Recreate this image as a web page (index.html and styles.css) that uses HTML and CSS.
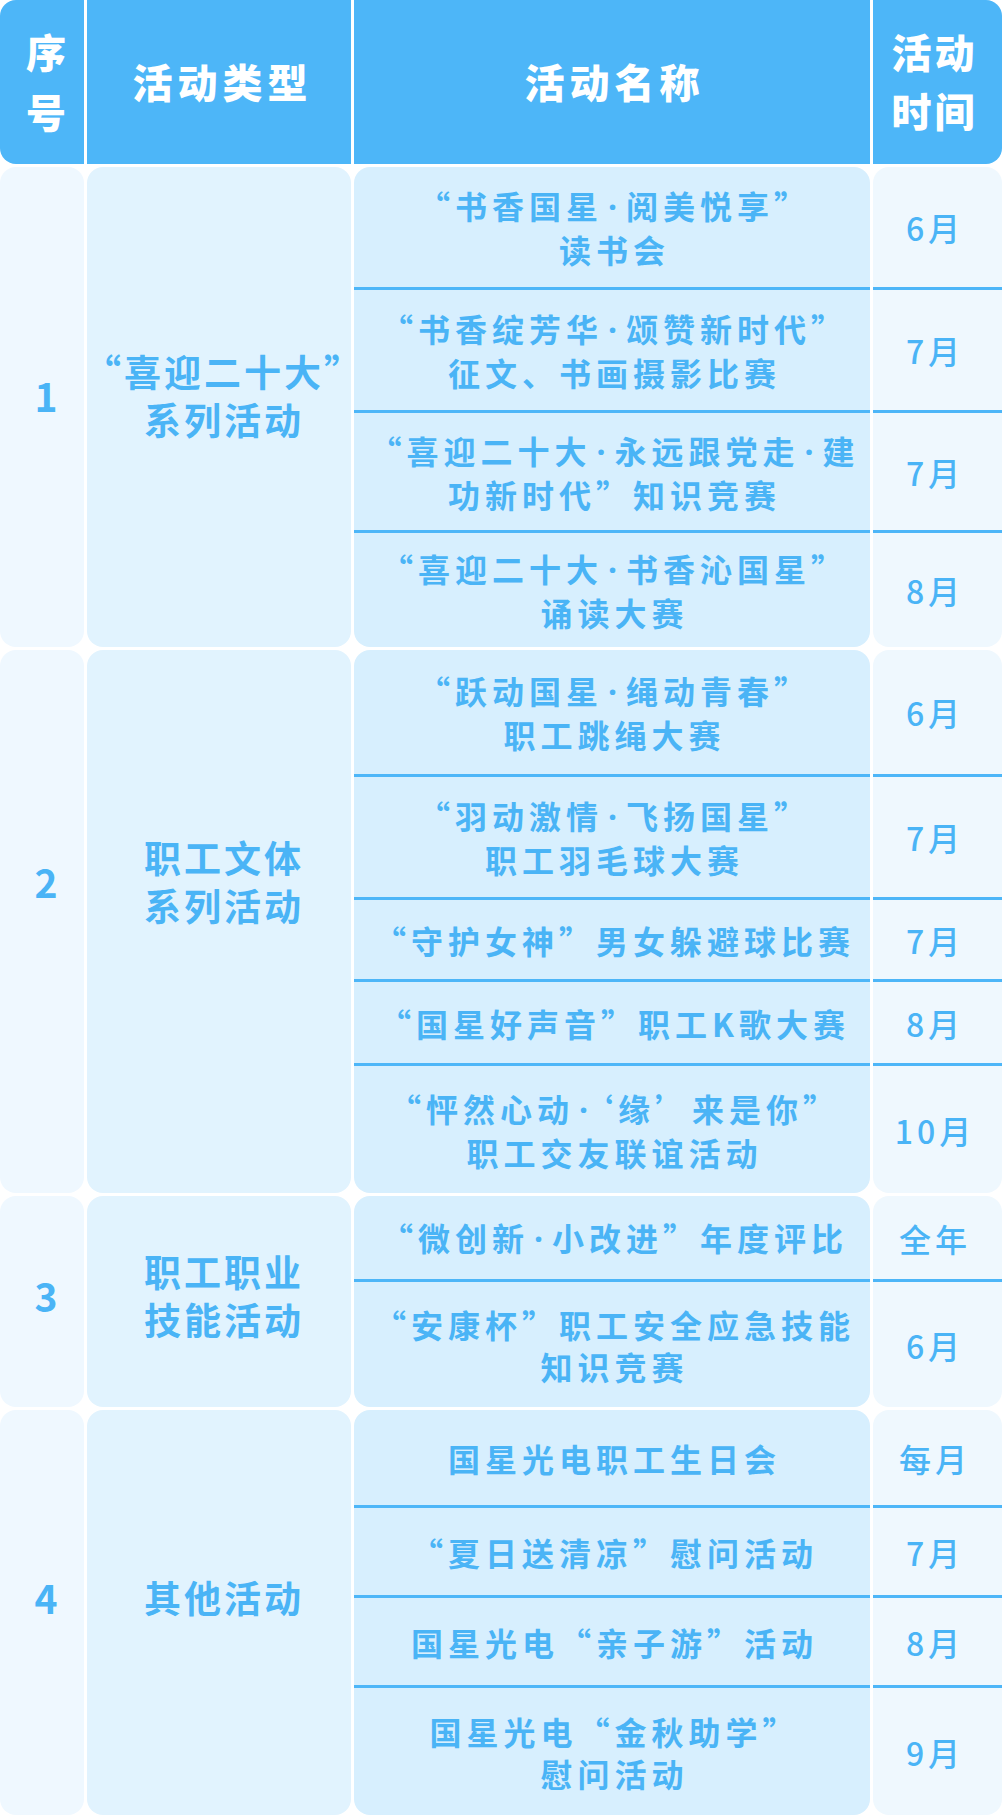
FILE: index.html
```html
<!DOCTYPE html>
<html lang="zh-CN">
<head>
<meta charset="utf-8">
<title>活动安排</title>
<link rel="stylesheet" href="styles.css">
</head>
<body>
<div class="table">
  <div class="head">
    <div class="hc hc1">序<br>号</div>
    <div class="hc hc2">活动类型</div>
    <div class="hc hc3">活动名称</div>
    <div class="hc hc4">活动<br>时间</div>
  </div>

  <div class="group g1">
    <div class="no">1</div>
    <div class="type">“喜迎二十大”<br>系列活动</div>
    <div class="name"><span class="txt">“书香国星<span class="dot">·</span>阅美悦享”<br>读书会</span></div>
    <div class="time">6月</div>
    <div class="name"><span class="txt">“书香绽芳华<span class="dot">·</span>颂赞新时代”<br>征文、书画摄影比赛</span></div>
    <div class="time">7月</div>
    <div class="name"><span class="txt">“喜迎二十大<span class="dot">·</span>永远跟党走<span class="dot">·</span>建<br>功新时代”知识竞赛</span></div>
    <div class="time">7月</div>
    <div class="name"><span class="txt">“喜迎二十大<span class="dot">·</span>书香沁国星”<br>诵读大赛</span></div>
    <div class="time">8月</div>
  </div>

  <div class="group g2">
    <div class="no">2</div>
    <div class="type">职工文体<br>系列活动</div>
    <div class="name"><span class="txt">“跃动国星<span class="dot">·</span>绳动青春”<br>职工跳绳大赛</span></div>
    <div class="time">6月</div>
    <div class="name"><span class="txt">“羽动激情<span class="dot">·</span>飞扬国星”<br>职工羽毛球大赛</span></div>
    <div class="time">7月</div>
    <div class="name"><span class="txt">“守护女神”男女躲避球比赛</span></div>
    <div class="time">7月</div>
    <div class="name"><span class="txt">“国星好声音”职工K歌大赛</span></div>
    <div class="time">8月</div>
    <div class="name"><span class="txt">“怦然心动<span class="dot">·</span>‘缘’来是你”<br>职工交友联谊活动</span></div>
    <div class="time">10月</div>
  </div>

  <div class="group g3">
    <div class="no">3</div>
    <div class="type">职工职业<br>技能活动</div>
    <div class="name"><span class="txt">“微创新<span class="dot">·</span>小改进”年度评比</span></div>
    <div class="time">全年</div>
    <div class="name"><span class="txt">“安康杯”职工安全应急技能<br>知识竞赛</span></div>
    <div class="time">6月</div>
  </div>

  <div class="group g4">
    <div class="no">4</div>
    <div class="type">其他活动</div>
    <div class="name"><span class="txt">国星光电职工生日会</span></div>
    <div class="time">每月</div>
    <div class="name"><span class="txt">“夏日送清凉”慰问活动</span></div>
    <div class="time">7月</div>
    <div class="name"><span class="txt">国星光电“亲子游”活动</span></div>
    <div class="time">8月</div>
    <div class="name"><span class="txt">国星光电“金秋助学”<br>慰问活动</span></div>
    <div class="time">9月</div>
  </div>
</div>
</body>
</html>
```

FILE: styles.css
```css
* {
  box-sizing: border-box;
}

html, body {
  margin: 0;
  padding: 0;
  background: #ffffff;
}

body {
  font-family: "Noto Sans CJK SC", "Noto Sans", sans-serif;
  color: #4ab4f6;
  width: 1002px;
}

.table {
  display: flex;
  flex-direction: column;
  gap: 3px;
  width: 1002px;
}

.head,
.group {
  display: grid;
  grid-template-columns: 84px 264px 516px 129px;
  column-gap: 3px;
}

.head {
  height: 164px;
  border-radius: 16px;
  overflow: hidden;
}

.hc {
  background: #4db6f8;
  color: #ffffff;
  font-weight: 900;
  font-size: 40px;
  display: flex;
  align-items: center;
  justify-content: center;
  text-align: center;
  white-space: nowrap;
}

.hc1 {
  line-height: 60px;
  padding-left: 8px;
  padding-bottom: 2px;
}

.hc2,
.hc3 {
  letter-spacing: 5px;
  padding-left: 7px;
  padding-bottom: 2px;
}

.hc3 {
  padding-left: 5px;
}

.hc4 {
  line-height: 59px;
  letter-spacing: 3px;
  padding-right: 6px;
  padding-bottom: 2px;
}

.g1 { grid-template-rows: 120px 123px 120px 117px; }
.g2 { grid-template-rows: 124px 123px 82px 84px 130px; }
.g3 { grid-template-rows: 83px 128px; }
.g4 { grid-template-rows: 95px 90px 90px 130px; }

.no,
.type {
  grid-row: 1 / -1;
  border-radius: 16px;
  display: flex;
  align-items: center;
  justify-content: center;
  text-align: center;
  white-space: nowrap;
  font-weight: 700;
}

.no {
  grid-column: 1;
  background: #eff8ff;
  font-size: 39px;
  padding-left: 8px;
}

.type {
  grid-column: 2;
  background: #e1f3fe;
  font-size: 37px;
  line-height: 48px;
  letter-spacing: 3px;
  padding-left: 10px;
}

.g1 .no, .g1 .type { padding-bottom: 25px; }
.g2 .no, .g2 .type { padding-bottom: 82px; }
.g3 .no, .g3 .type { padding-bottom: 13px; }
.g4 .no, .g4 .type { padding-bottom: 32px; }

.name,
.time {
  display: flex;
  align-items: center;
  justify-content: center;
  text-align: center;
  white-space: nowrap;
}

.name {
  grid-column: 3;
  background: #d7effe;
  font-size: 32px;
  font-weight: 700;
  line-height: 42px;
  letter-spacing: 5px;
  padding-left: 5px;
}

.txt {
  display: block;
  text-align: center;
}

.dot {
  font-family: "Noto Sans", "DejaVu Sans", sans-serif;
  font-weight: 700;
  margin: 0 4px 0 5px;
}

.time {
  grid-column: 4;
  background: #eff8fe;
  font-size: 32px;
  font-weight: 500;
  letter-spacing: 4px;
  padding-right: 5px;
}

.group > .name:not(:nth-child(3)),
.group > .time:not(:nth-child(4)) {
  border-top: 3px solid #4db6f8;
}

.group > .name:nth-child(3) { border-radius: 16px 16px 0 0; }
.group > .time:nth-child(4) { border-radius: 16px 16px 0 0; }
.group > .name:nth-last-child(2) { border-radius: 0 0 16px 16px; }
.group > .time:last-child { border-radius: 0 0 16px 16px; }
```
